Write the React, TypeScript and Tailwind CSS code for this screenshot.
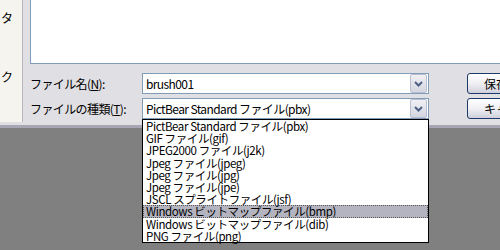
import React from "react";

const FONT = { fontFamily: '"Noto Sans CJK JP", "Noto Sans", sans-serif' };

const TYPES = [
  "PictBear Standard ファイル(pbx)",
  "GIF ファイル(gif)",
  "JPEG2000 ファイル(j2k)",
  "Jpeg ファイル(jpeg)",
  "Jpeg ファイル(jpg)",
  "Jpeg ファイル(jpe)",
  "JSCL スプライトファイル(jsf)",
  "Windows ビットマップファイル(bmp)",
  "Windows ビットマップファイル(dib)",
  "PNG ファイル(png)",
];

function Chevron() {
  return (
    <svg width="9" height="6" viewBox="0 0 9 6">
      <path d="M1 1 L4.5 4.5 L8 1" fill="none" stroke="#4d6185" strokeWidth="2" />
    </svg>
  );
}

function ComboBox({ value }: { value: string }) {
  return (
    <div className="shrink-0 w-[287px] h-[21px] bg-white border border-[#7f9db9] flex items-center">
      <span className="flex-1 pl-[3px] text-[12px] leading-none tracking-[-0.6px] text-black whitespace-nowrap">
        {value}
      </span>
      <div className="shrink-0 w-[17px] h-[19px] mr-px flex items-center justify-center rounded-[2px] border border-[#b8bfd0] bg-gradient-to-b from-[#f0f0f4] to-[#d4d6e0]">
        <Chevron />
      </div>
    </div>
  );
}

function XpButton({ label }: { label: string }) {
  return (
    <div className="shrink-0 w-[80px] h-[21px] rounded-[3px] border border-[#1c3a6a] bg-gradient-to-b from-white via-[#f0f0f4] to-[#cfd0dc] flex items-center pl-[16px] text-[12px] leading-none text-black whitespace-nowrap">
      {label}
    </div>
  );
}

export default function App() {
  return (
    <div className="relative w-[500px] h-[250px] overflow-hidden bg-[#808080]" style={FONT}>
      {/* dialog body */}
      <div className="h-[128px] bg-[#e0dfe3] border-b-[3px] border-[#a7a6b4] flex">
        <div className="shrink-0 w-[23px] h-[122px] bg-[#f5f4ef] border-r border-[#b9b8c0] text-[12px] leading-none text-black">
          <div className="pt-[12px] pl-[1px]">タ</div>
          <div className="pt-[47px] pl-[1px]">ク</div>
        </div>
        <div className="flex-1 min-w-0 pl-[7px] flex flex-col">
          <div className="h-[64px] bg-white border-l border-b border-[#7f9db9]" />
          <div className="mt-[9px] flex items-center h-[21px]">
            <span className="shrink-0 w-[112px] text-[12px] leading-none tracking-[-0.6px] whitespace-nowrap">
              ファイル名(<span className="underline">N</span>):
            </span>
            <ComboBox value="brush001" />
            <div className="shrink-0 ml-[38px]">
              <XpButton label="保存(S)" />
            </div>
          </div>
          <div className="mt-[4px] flex items-center h-[21px]">
            <span className="shrink-0 w-[112px] text-[12px] leading-none tracking-[-0.6px] whitespace-nowrap">
              ファイルの種類(<span className="underline">T</span>):
            </span>
            <ComboBox value="PictBear Standard ファイル(pbx)" />
            <div className="shrink-0 ml-[38px]">
              <XpButton label="キャンセル" />
            </div>
          </div>
        </div>
      </div>

      {/* open dropdown list */}
      <div className="absolute left-[142px] top-[119px] w-[287px] bg-white border border-black">
        {TYPES.map((t, i) => (
          <div
            key={t}
            className={
              i === 7
                ? "h-[12.2px] pl-[3px] text-[11.5px] leading-[12px] tracking-[-0.4px] whitespace-nowrap text-black bg-[#b3b4c0] outline-1 outline-dotted outline-offset-[-1px] outline-[#555]"
                : "h-[12.2px] pl-[3px] text-[11.5px] leading-[12px] tracking-[-0.4px] whitespace-nowrap text-black"
            }
          >
            {t}
          </div>
        ))}
      </div>
    </div>
  );
}
